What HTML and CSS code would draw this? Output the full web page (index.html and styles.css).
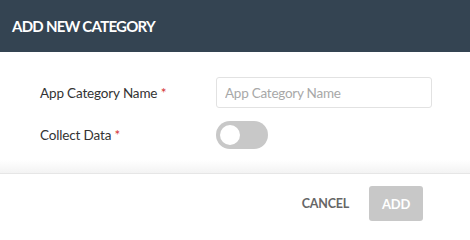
FILE: index.html
```html
<!DOCTYPE html>
<html>
<head>
<meta charset="utf-8">
<link rel="stylesheet" href="styles.css">
</head>
<body>
<div class="dialog">
  <div class="header">ADD NEW CATEGORY</div>
  <div class="body">
    <div class="row">
      <label class="label">App Category Name <span class="req">*</span></label>
      <input class="input" type="text" placeholder="App Category Name">
    </div>
    <div class="row row-toggle">
      <label class="label">Collect Data <span class="req">*</span></label>
      <div class="toggle"><div class="knob"></div></div>
    </div>
  </div>
  <div class="footer">
    <button class="btn btn-cancel">CANCEL</button>
    <button class="btn btn-add">ADD</button>
  </div>
</div>
</body>
</html>
```
FILE: styles.css
```css
* { box-sizing: border-box; }
html, body { margin: 0; padding: 0; background: #fff; }
body { font-family: Lato, "Noto Sans", sans-serif; width: 470px; height: 233px; overflow: hidden; }
.dialog { display: flex; flex-direction: column; height: 233px; }
.header {
  height: 52px; background: #344452; color: #fff;
  font-weight: 700; font-size: 15px; padding: 0 12px;
  display: flex; align-items: center; letter-spacing: -0.75px;
}
.body { padding: 25px 38px 0 40px; height: 121px;
  background: linear-gradient(to bottom, #fff 0, #fff 108px, #f3f3f3 121px); }
.row { display: flex; align-items: center; height: 31px; }
.row-toggle { margin-top: 13px; height: 28px; }
.label { width: 176px; font-size: 13.5px; color: #333; letter-spacing: -0.15px; }
.req { color: #d32f2f; }
.input {
  width: 216px; height: 31px; border: 1px solid #e2e2e2; border-radius: 3px;
  padding: 0 8px; font-family: inherit; font-size: 13.5px; color: #333; outline: none; letter-spacing: -0.25px;
}
.input::placeholder { color: #a8a8a8; }
.toggle { width: 52px; height: 28px; border-radius: 14px; background: #c8c8c8; padding: 4px; }
.knob { width: 20px; height: 20px; border-radius: 50%; background: #fff; }
.footer {
  border-top: 1px solid #e6e6e6; flex: 1;
  display: flex; justify-content: flex-end; align-items: center; padding: 0 47px 0 0; gap: 20px;
}
.btn { font-family: inherit; font-weight: 700; font-size: 12.5px; border: none; border-radius: 3px; letter-spacing: -0.2px; }
.btn-cancel { background: none; color: #666; padding: 0; }
.btn-add { background: #c8c8c8; color: #fff; width: 54px; height: 35px; font-size: 13px; }
```
